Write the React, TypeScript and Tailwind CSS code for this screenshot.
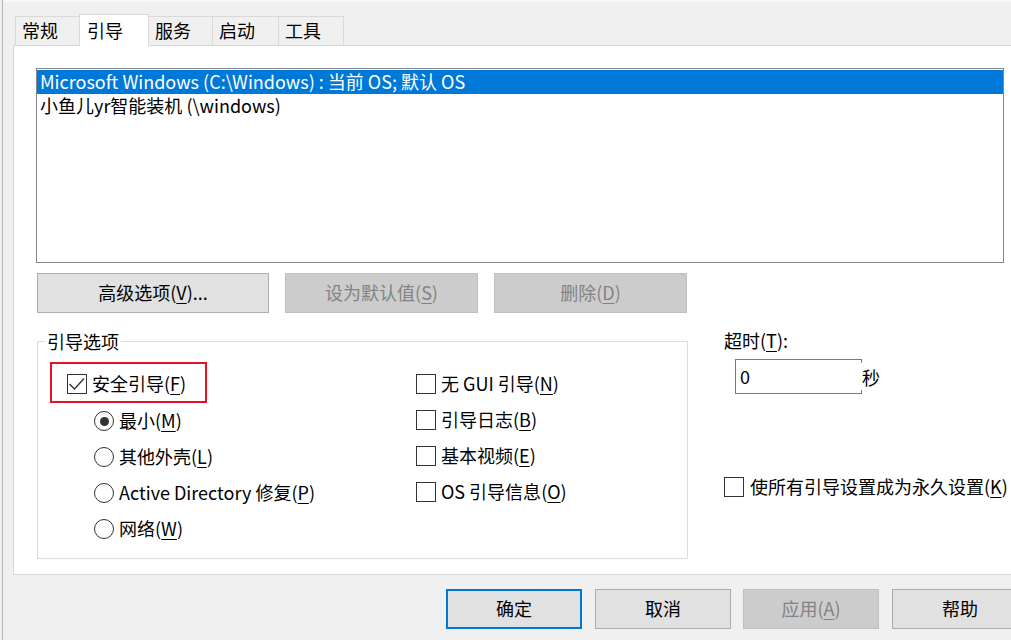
import React from "react";

const U = ({ c }: { c: string }) => (
  <span className="underline decoration-1 underline-offset-[3px]">{c}</span>
);

const T = ({ children, className = "" }: { children: React.ReactNode; className?: string }) => (
  <span className={`relative top-[-1px] whitespace-nowrap ${className}`}>{children}</span>
);

function Box({ checked = false }: { checked?: boolean }) {
  return (
    <span className="relative flex h-[20px] w-[20px] shrink-0 border border-[#333333] bg-white">
      {checked && (
        <svg
          className="absolute left-[-1px] top-[-1px]"
          width="20"
          height="20"
          viewBox="0 0 20 20"
          fill="none"
        >
          <path d="M2.5 10 L7.5 15 L17 4.5" stroke="#333333" strokeWidth="1.4" />
        </svg>
      )}
    </span>
  );
}

function Radio({ selected = false }: { selected?: boolean }) {
  return (
    <span className="flex h-[20px] w-[20px] shrink-0 items-center justify-center rounded-full border border-[#333333] bg-white">
      {selected && <span className="h-[9px] w-[9px] rounded-full bg-[#333333]" />}
    </span>
  );
}

function Tab({ label, w, selected = false, first = false }: { label: string; w: string; selected?: boolean; first?: boolean }) {
  if (selected) {
    return (
      <div
        className={`relative z-10 -mb-px ml-[-1px] flex h-[32px] items-center border-x border-t border-[#d9d9d9] bg-white pl-[7px] ${w}`}
      >
        <T>{label}</T>
      </div>
    );
  }
  return (
    <div
      className={`flex h-[29px] items-center border-x border-t border-[#d9d9d9] bg-[#f0f0f0] pl-[6px] ${first ? "" : "ml-[-1px]"} ${w}`}
    >
      <T>{label}</T>
    </div>
  );
}

function Btn({
  children,
  w,
  disabled = false,
  primary = false,
}: {
  children: React.ReactNode;
  w: string;
  disabled?: boolean;
  primary?: boolean;
}) {
  const cls = disabled
    ? "border border-[#bfbfbf] bg-[#cccccc] text-[#838383]"
    : primary
    ? "border-2 border-[#0078d7] bg-[#e1e1e1] text-black"
    : "border border-[#adadad] bg-[#e1e1e1] text-black";
  return (
    <div className={`flex h-[40px] shrink-0 items-center justify-center ${w} ${cls}`}>
      <T>{children}</T>
    </div>
  );
}

function CheckRow({ label, k, pre = "" }: { label: string; k: string; pre?: string }) {
  return (
    <div className="flex h-[36px] items-center">
      <Box />
      <T className="ml-[5px]">
        {pre}
        {label}(<U c={k} />)
      </T>
    </div>
  );
}

function RadioRow({ label, k, selected = false }: { label: string; k: string; selected?: boolean }) {
  return (
    <div className="flex h-[36px] items-center">
      <Radio selected={selected} />
      <T className="ml-[5px]">
        {label}(<U c={k} />)
      </T>
    </div>
  );
}

export default function App() {
  return (
    <div className="flex h-[640px] w-[1011px] overflow-hidden bg-[#f0f0f0] font-['Noto_Sans_CJK_SC',sans-serif] text-[18px] leading-none text-black">
      <div className="w-[2px] shrink-0 bg-[#f0f0f0]" />
      <div className="w-px shrink-0 bg-[#b4b4b4]" />
      <div className="flex min-w-0 flex-1 flex-col pl-[10px]">
        {/* top light strip */}
        <div className="-ml-[10px] h-[2px] shrink-0 bg-[#f8f8f8]" />
        {/* tabs */}
        <div className="mt-[12px] flex h-[31px] shrink-0 items-end pl-[2px]">
          <Tab label="常规" w="w-[65px]" first />
          <Tab label="引导" w="w-[70px]" selected />
          <Tab label="服务" w="w-[65px]" />
          <Tab label="启动" w="w-[67px]" />
          <Tab label="工具" w="w-[66px]" />
        </div>
        {/* panel */}
        <div className="flex h-[530px] w-[1100px] shrink-0 flex-col border-y border-l border-[#d9d9d9] bg-white pl-[22px] pt-[22px]">
          {/* list */}
          <div className="h-[195px] w-[968px] border border-[#828790] bg-white pt-px">
            <div className="flex h-[24px] items-center bg-[#0078d7] pl-[3px] text-white">
              <T>Microsoft Windows (C:\Windows) : 当前 OS; 默认 OS</T>
            </div>
            <div className="flex h-[24px] items-center pl-[3px]">
              <T>小鱼儿yr智能装机 (\windows)</T>
            </div>
          </div>
          {/* buttons */}
          <div className="ml-px mt-[10px] flex">
            <Btn w="w-[232px]">
              高级选项(<U c="V" />)...
            </Btn>
            <div className="ml-[16px]">
              <Btn w="w-[193px]" disabled>
                设为默认值(<U c="S" />)
              </Btn>
            </div>
            <div className="ml-[16px]">
              <Btn w="w-[193px]" disabled>
                删除(<U c="D" />)
              </Btn>
            </div>
          </div>
          {/* lower area */}
          <div className="mt-[17px] flex items-start">
            {/* group box */}
            <div className="relative ml-px mt-[11px] flex h-[218px] w-[651px] shrink-0 border border-[#dcdcdc] pl-[12px] pt-[20px]">
              <span className="absolute left-[7px] top-[-11px] flex h-[22px] items-center bg-white px-[2px]">
                <T>引导选项</T>
              </span>
              <div className="flex w-[366px] shrink-0 flex-col">
                <div className="flex h-[41px] w-[157px] items-center border-2 border-[#e81123] pl-[15px] pt-[3px]">
                  <Box checked />
                  <T className="ml-[5px]">
                    安全引导(<U c="F" />)
                  </T>
                </div>
                <div className="flex flex-col pl-[44px]">
                  <RadioRow label="最小" k="M" selected />
                  <RadioRow label="其他外壳" k="L" />
                  <RadioRow label="Active Directory 修复" k="P" />
                  <RadioRow label="网络" k="W" />
                </div>
              </div>
              <div className="flex flex-col pt-[4px]">
                <CheckRow label="无 GUI 引导" k="N" />
                <CheckRow label="引导日志" k="B" />
                <CheckRow label="基本视频" k="E" />
                <CheckRow label="OS 引导信息" k="O" />
              </div>
            </div>
            {/* right side */}
            <div className="ml-[36px] flex flex-col">
              <div className="flex h-[22px] items-center">
                <T>
                  超时(<U c="T" />):
                </T>
              </div>
              <div className="ml-[11px] mt-[7px] flex items-center">
                <div className="flex h-[35px] w-[126px] items-center border-y border-l border-[#7a7a7a] pl-[4px]">
                  <T>0</T>
                </div>
                <div className="flex h-[35px] w-px flex-col justify-between">
                  <span className="h-[4px] w-px bg-[#7a7a7a]" />
                  <span className="h-[4px] w-px bg-[#7a7a7a]" />
                </div>
                <span className="mt-[2px]">
                  <T>秒</T>
                </span>
              </div>
              <div className="mt-[83px] flex h-[20px] items-center">
                <Box />
                <T className="ml-[6px]">
                  使所有引导设置成为永久设置(<U c="K" />)
                </T>
              </div>
            </div>
          </div>
        </div>
        {/* bottom buttons */}
        <div className="mt-[14px] flex pl-[433px]">
          <Btn w="w-[136px]" primary>
            确定
          </Btn>
          <div className="ml-[13px]">
            <Btn w="w-[136px]">取消</Btn>
          </div>
          <div className="ml-[12px]">
            <Btn w="w-[136px]" disabled>
              应用(<U c="A" />)
            </Btn>
          </div>
          <div className="ml-[13px]">
            <Btn w="w-[136px]">帮助</Btn>
          </div>
        </div>
      </div>
    </div>
  );
}
